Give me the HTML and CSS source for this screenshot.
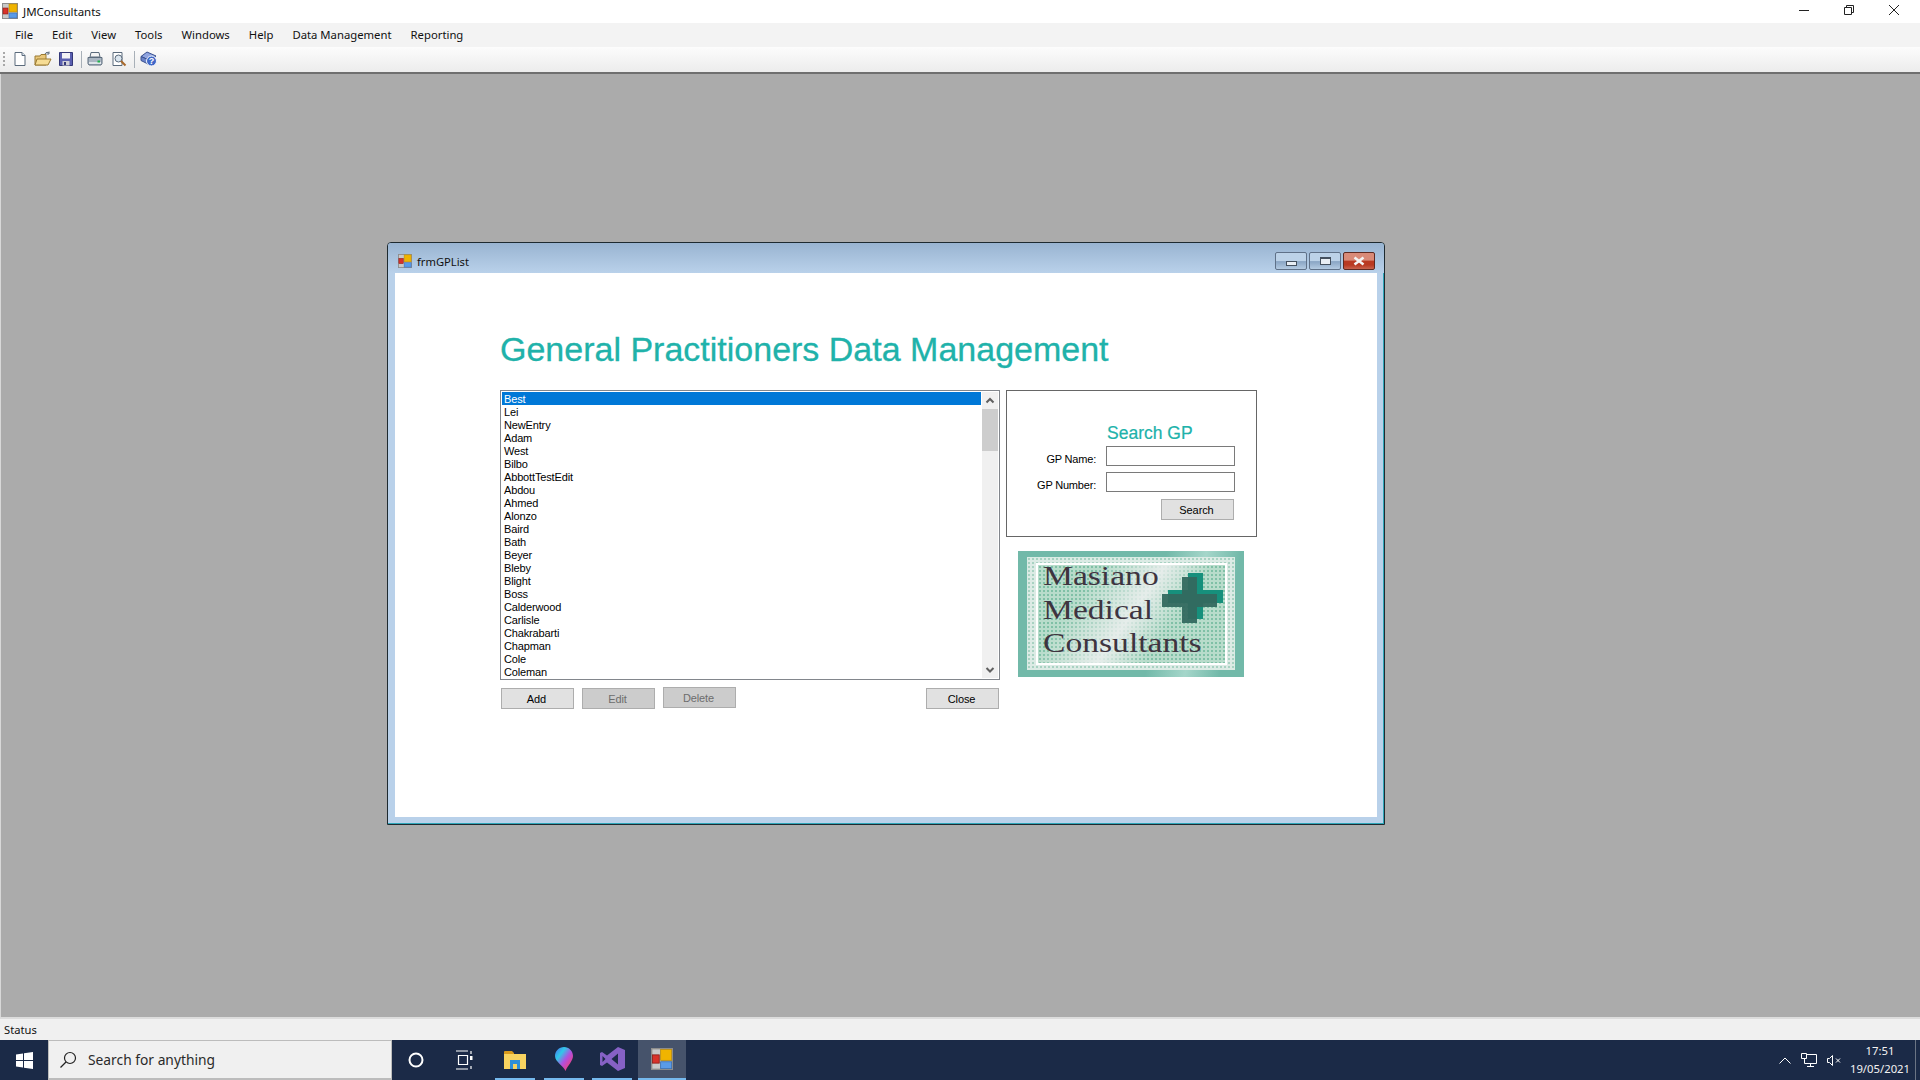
FILE: index.html
```html
<!DOCTYPE html>
<html lang="en">
<head>
    <meta charset="UTF-8">
    <title>JMConsultants</title>
    <link rel="stylesheet" href="styles.css">
</head>
<body>
    <svg width="0" height="0" class="defs">
        <symbol id="app-icon" viewBox="0 0 16 16">
            <rect x="0.5" y="0.5" width="15" height="15" fill="#c9c9c9" stroke="#8d8d8d"/>
            <rect x="7" y="1" width="8" height="8" fill="#f0b400" stroke="#b98a10" stroke-width="0.6"/>
            <rect x="1" y="5" width="5" height="6" fill="#d8322a" stroke="#8a1d18" stroke-width="0.6"/>
            <rect x="7" y="10" width="8" height="5" fill="#5a9be8" stroke="#3a6db0" stroke-width="0.6"/>
        </symbol>
    </svg>

    <div class="titlebar">
        <svg class="app-icon" width="16" height="16"><use href="#app-icon"/></svg>
        <span class="app-name">JMConsultants</span>
        <div class="win-controls">
            <svg width="12" height="12" viewBox="0 0 12 12"><path d="M1 6.5h10" stroke="#222" fill="none"/></svg>
            <svg width="12" height="12" viewBox="0 0 12 12"><path d="M1.5 3.5h7v7h-7zM3.5 3.5v-2h7v7h-2" stroke="#222" fill="none"/></svg>
            <svg width="12" height="12" viewBox="0 0 12 12"><path d="M1 1l10 10M11 1L1 11" stroke="#222" fill="none"/></svg>
        </div>
    </div>

    <div class="menubar">
        <span>File</span><span>Edit</span><span>View</span><span>Tools</span><span>Windows</span><span>Help</span><span>Data Management</span><span>Reporting</span>
    </div>

    <div class="toolbar">
        <div class="grip"></div>
        <svg class="tool" width="16" height="16" viewBox="0 0 16 16"><path d="M3 1.5h7l3 3v10H3z" fill="#fff" stroke="#5b6b7c"/><path d="M10 1.5v3h3" fill="#dfe8f2" stroke="#5b6b7c"/></svg>
        <svg class="tool" width="18" height="16" viewBox="0 0 18 16"><path d="M1 5h5l1-1.500h5V14H1z" fill="#e9c77a" stroke="#9a7a32"/><path d="M3 8h14l-3 6H1z" fill="#f6dc94" stroke="#9a7a32"/><path d="M11 3c1-2 3-2 4-1M15 0.500v2.500h-2.500" fill="none" stroke="#5b6b7c"/></svg>
        <svg class="tool" width="16" height="16" viewBox="0 0 16 16"><path d="M1.500 1.500h13v13h-13z" fill="#5a5fb0" stroke="#343878"/><path d="M4 2h8v5.500H4z" fill="#f2f2f6"/><path d="M4.500 10h7v4.500h-7z" fill="#d0d0d8"/><path d="M6 11h2v3H6z" fill="#343878"/></svg>
        <div class="tool-sep"></div>
        <svg class="tool tool-print" width="16" height="16" viewBox="0 0 16 16"><path d="M4 1.500h8L13 6H3z" fill="#f4f4f4" stroke="#5b6b7c"/><path d="M1 6.500h14v6l-1 1.500H2l-1-1.500z" fill="#aab6c2" stroke="#5b6b7c"/><path d="M2 11h12v2H2z" fill="#dfe5ea"/><path d="M10.500 9.500h2.500v2h-2.500z" fill="#1fb14a"/></svg>
        <svg class="tool" width="16" height="16" viewBox="0 0 16 16"><path d="M2 1.500h9v13H2z" fill="#fff" stroke="#5b6b7c"/><circle cx="7.500" cy="7.500" r="3.500" fill="#dbe6ef" stroke="#5b6b7c"/><path d="M10 10l4.500 4.500" stroke="#a8682a" stroke-width="2"/></svg>
        <div class="tool-sep"></div>
        <svg class="tool" width="17" height="16" viewBox="0 0 17 16"><path d="M1 5.500l6-4.500 9 4-6 4.500z" fill="#8fa4e0" stroke="#38508f"/><path d="M1 5.500v4l9 4.500v-4.500z" fill="#6c83c8" stroke="#38508f"/><circle cx="11.500" cy="10" r="5" fill="#3f68c8" stroke="#f2f5fb"/><text x="11.500" y="13.300" class="help-mark">?</text></svg>
    </div>

    <main class="mdi">
        <section class="child-window">
            <header class="child-title">
                <svg class="child-icon" width="14" height="14"><use href="#app-icon"/></svg>
                <span class="child-name">frmGPList</span>
                <div class="child-controls">
                    <div class="cap-btn"><span class="cap-min"></span></div>
                    <div class="cap-btn"><span class="cap-max"></span></div>
                    <div class="cap-btn cap-close"><svg width="14" height="10" viewBox="0 0 14 10"><path d="M2.500 1.500l9 7M11.500 1.500l-9 7" stroke="#f4f4f4" stroke-width="2.600" fill="none"/></svg></div>
                </div>
            </header>

            <div class="client">
                <h1 class="page-heading">General Practitioners Data Management</h1>

                <div class="columns">
                    <div class="list-col">
                        <div class="listbox">
                            <ul class="gp-list">
                                <li class="selected">Best</li>
                                <li>Lei</li>
                                <li>NewEntry</li>
                                <li>Adam</li>
                                <li>West</li>
                                <li>Bilbo</li>
                                <li>AbbottTestEdit</li>
                                <li>Abdou</li>
                                <li>Ahmed</li>
                                <li>Alonzo</li>
                                <li>Baird</li>
                                <li>Bath</li>
                                <li>Beyer</li>
                                <li>Bleby</li>
                                <li>Blight</li>
                                <li>Boss</li>
                                <li>Calderwood</li>
                                <li>Carlisle</li>
                                <li>Chakrabarti</li>
                                <li>Chapman</li>
                                <li>Cole</li>
                                <li>Coleman</li>
                            </ul>
                            <div class="scrollbar">
                                <svg class="arrow" width="16" height="17" viewBox="0 0 16 17"><path d="M4.500 10.500L8 7l3.500 3.500" stroke="#606060" stroke-width="2" fill="none"/></svg>
                                <div class="thumb"></div>
                                <svg class="arrow arrow-down" width="16" height="17" viewBox="0 0 16 17"><path d="M4.500 7L8 10.500 11.500 7" stroke="#606060" stroke-width="2" fill="none"/></svg>
                            </div>
                        </div>
                        <div class="list-buttons">
                            <button class="btn">Add</button>
                            <button class="btn btn-off">Edit</button>
                            <button class="btn btn-off btn-raised">Delete</button>
                            <button class="btn btn-close">Close</button>
                        </div>
                    </div>

                    <div class="side-col">
                        <div class="search-box">
                            <h2 class="search-heading">Search GP</h2>
                            <div class="field">
                                <label class="field-label">GP Name:</label>
                                <input class="field-input" type="text">
                            </div>
                            <div class="field">
                                <label class="field-label">GP Number:</label>
                                <input class="field-input" type="text">
                            </div>
                            <button class="btn btn-search">Search</button>
                        </div>

                        <div class="logo">
                            <div class="logo-band">
                                <div class="logo-inner">
                                    <div class="logo-text">
                                        <div>Masiano</div>
                                        <div>Medical</div>
                                        <div>Consultants</div>
                                    </div>
                                    <svg class="logo-cross" width="61" height="50" viewBox="0 0 61 50">
                                        <path d="M26 0h15v17h20v13H41v16H26V30H6V17h20z" fill="#16907c"/>
                                        <path d="M20 4h15v17h20v13H35v16H20V34H0V21h20z" fill="#33695f" opacity="0.95"/>
                                    </svg>
                                </div>
                            </div>
                        </div>
                    </div>
                </div>
            </div>
        </section>
    </main>

    <div class="statusbar">Status</div>

    <footer class="taskbar">
        <div class="start">
            <svg width="17" height="17" viewBox="0 0 17 17"><path d="M0 2.400l7-1v6.600H0zM8 1.200L17 0v8H8zM0 9h7v6.600l-7-1zM8 9h9v8l-9-1.200z" fill="#fff"/></svg>
        </div>
        <div class="task-search">
            <svg width="18" height="18" viewBox="0 0 18 18"><circle cx="11" cy="7" r="5.500" fill="none" stroke="#222" stroke-width="1.200"/><path d="M7 11l-5.500 5.500" stroke="#222" stroke-width="1.300"/></svg>
            <span>Search for anything</span>
        </div>
        <div class="task-icon">
            <svg width="18" height="18" viewBox="0 0 18 18"><circle cx="9" cy="9" r="6.500" fill="none" stroke="#fff" stroke-width="2"/></svg>
        </div>
        <div class="task-icon">
            <svg width="18" height="20" viewBox="0 0 18 20"><path d="M1 1h12M1 19h12M3.500 5.500h9v9h-9z" fill="none" stroke="#fff" stroke-width="1.200"/><path d="M15 6h2.500v4H15z" fill="#fff"/><path d="M16 1v3M16 16v3" stroke="#fff" stroke-width="1.200"/></svg>
        </div>
        <div class="task-app running explorer">
            <svg width="22" height="19" viewBox="0 0 22 19"><path d="M0 2a1 1 0 0 1 1-1h7l2 2v2H0z" fill="#d99a1c"/><path d="M0 4h22v15H0z" fill="#f8d360"/><path d="M6 10h10v9h-3v-5H9v5H6z" fill="#2f8fd8"/></svg>
        </div>
        <div class="task-app running">
            <svg width="18" height="24" viewBox="0 0 18 24">
                <defs>
                    <linearGradient id="pin-fill" x1="0" y1="0" x2="1" y2="1">
                        <stop offset="0" stop-color="#4a6cf0"/>
                        <stop offset="0.3" stop-color="#30c8e8"/>
                        <stop offset="0.55" stop-color="#b050e0"/>
                        <stop offset="0.85" stop-color="#f0407a"/>
                        <stop offset="1" stop-color="#f09030"/>
                    </linearGradient>
                </defs>
                <path d="M9 0c5 0 9 4 9 9 0 5-5 9-7.500 15C9 19 0 15 0 9c0-5 4-9 9-9z" fill="url(#pin-fill)"/>
            </svg>
        </div>
        <div class="task-app running">
            <svg width="25" height="24" viewBox="0 0 25 24"><path d="M18 0l7 3v18l-7 3-11-8.500L2 19l-2-1V6l2-1 5 3.500zM18 6.500L11.500 12 18 17.500zM2.500 9v6l3-3z" fill="#8661c5"/></svg>
        </div>
        <div class="task-app running active">
            <svg width="22" height="22"><use href="#app-icon"/></svg>
        </div>

        <div class="tray">
            <svg width="12" height="7" viewBox="0 0 12 7"><path d="M0.500 6.500L6 1l5.500 5.500" fill="none" stroke="#fff"/></svg>
            <svg width="16" height="14" viewBox="0 0 16 14"><path d="M3.500 1.500h12v9h-12zM9.500 10.500v3M6 13.500h7" fill="none" stroke="#fff"/><path d="M0.500 0.500h5v5h-5z" fill="#1b2a47" stroke="#fff"/></svg>
            <svg width="14" height="11" viewBox="0 0 14 11"><path d="M0.500 3.500h2l3-3v10l-3-3h-2zM9 3.500l4 4M13 3.500l-4 4" fill="none" stroke="#fff"/></svg>
            <div class="clock">
                <div>17:51</div>
                <div>19/05/2021</div>
            </div>
        </div>
    </footer>
</body>
</html>
```

FILE: styles.css
```css
* {
    box-sizing: border-box;
}
html, body {
    margin: 0;
    height: 100%;
    overflow: hidden;
}
body {
    display: flex;
    flex-direction: column;
    height: 1080px;
    font-family: "Noto Sans", "Open Sans", sans-serif;
    font-size: 12px;
    color: #111;
    background: #ababab;
}
.defs {
    position: absolute;
}

/* main window chrome */
.titlebar {
    display: flex;
    align-items: center;
    height: 23px;
    background: #fff;
    flex: none;
}
.app-icon {
    margin-left: 2px;
    margin-top: -2px;
}
.app-name {
    margin-left: 5px;
    font-size: 11.5px;
}
.win-controls {
    display: flex;
    gap: 33px;
    margin-left: auto;
    margin-right: 20px;
    margin-top: -3px;
}
.menubar {
    display: flex;
    align-items: center;
    gap: 19px;
    height: 24px;
    padding: 0 0 2px 15px;
    background: #f3f3f3;
    flex: none;
    font-size: 11.3px;
}
.toolbar {
    display: flex;
    align-items: center;
    height: 27px;
    padding: 0 0 1px 3px;
    background: linear-gradient(#fcfcfc, #ececec);
    border-bottom: 2px solid #6f6f6f;
    flex: none;
}
.grip {
    width: 2px;
    height: 14px;
    margin-right: 7px;
    background: repeating-linear-gradient(#a8a8a8 0 2px, transparent 2px 4px);
}
.tool {
    margin-right: 6px;
}
.tool-print {
    margin-right: 8px;
}
.tool-sep {
    width: 1px;
    height: 17px;
    margin: 0 5px 0 1px;
    background: #a8b0b8;
}
.help-mark {
    font-family: "Liberation Sans", sans-serif;
    font-size: 9px;
    font-weight: bold;
    fill: #fff;
    text-anchor: middle;
}

/* mdi area */
.mdi {
    position: relative;
    flex: 1;
    border-left: 1px solid #d8d8d8;
    background: #ababab;
}
.child-window {
    position: absolute;
    left: 386px;
    top: 168px;
    display: flex;
    flex-direction: column;
    width: 998px;
    height: 583px;
    padding: 0 7px 7px 7px;
    background: #b9d1ea;
    border: 1px solid #1e2a30;
    border-radius: 4px 4px 0 0;
    box-shadow: inset -1px -1px 0 #2ea6b8;
}
.child-title {
    display: flex;
    align-items: center;
    height: 30px;
    margin: 0 -7px;
    padding: 6px 9px 0 10px;
    background: linear-gradient(#99b4d1, #b9d1ea);
    flex: none;
    border-radius: 3px 3px 0 0;
}
.child-name {
    margin-left: 5px;
    font-size: 11.2px;
}
.child-controls {
    display: flex;
    gap: 2px;
    margin-left: auto;
}
.cap-btn {
    display: flex;
    align-items: center;
    justify-content: center;
    width: 32px;
    height: 18px;
    background: linear-gradient(#bcd2e8 0 50%, #8faac8 50% 60%, #b4cbe2 100%);
    border: 1px solid #5f7188;
    border-radius: 2px;
}
.cap-close {
    background: linear-gradient(#d98a78 0 45%, #b93a22 50% 75%, #c8644e 100%);
    border-color: #5e2a22;
}
.cap-min {
    width: 11px;
    height: 5px;
    margin-top: 4px;
    background: #e8eef4;
    border: 1px solid #44505e;
}
.cap-max {
    width: 11px;
    height: 8px;
    background: #e8eef4;
    border: 1px solid #44505e;
    border-top-width: 2px;
}

.client {
    flex: 1;
    padding: 56px 0 0 105px;
    background: #fff;
}
.page-heading {
    margin: 0;
    font-family: "Liberation Sans", Arial, sans-serif;
    font-size: 34px;
    font-weight: normal;
    line-height: 40px;
    color: #20b2aa;
    -webkit-text-stroke: 0.3px #20b2aa;
}
.columns {
    display: flex;
    gap: 6px;
    margin-top: 21px;
}

/* list side */
.list-col {
    display: flex;
    flex-direction: column;
    width: 500px;
}
.listbox {
    display: flex;
    height: 290px;
    padding: 1px;
    background: #fff;
    border: 1px solid #82868c;
}
.gp-list {
    flex: 1;
    margin: 0;
    padding: 0;
    list-style: none;
    overflow: hidden;
    font-family: "Liberation Sans", Arial, sans-serif;
    font-size: 11px;
    letter-spacing: -0.15px;
    line-height: 14px;
}
.gp-list li {
    height: 13px;
    padding-left: 2px;
    color: #000;
}
.gp-list li.selected {
    background: #0078d7;
    color: #fff;
}
.scrollbar {
    display: flex;
    flex-direction: column;
    width: 16px;
    margin-left: 1px;
    background: #f0f0f0;
}
.arrow {
    flex: none;
}
.arrow-down {
    margin-top: auto;
}
.thumb {
    height: 42px;
    background: #cdcdcd;
}
.list-buttons {
    display: flex;
    align-items: flex-start;
    gap: 8px;
    margin-top: 8px;
    padding-left: 1px;
}
.btn {
    width: 73px;
    height: 21px;
    padding: 0 2px 0 0;
    font-family: "Liberation Sans", Arial, sans-serif;
    font-size: 11px;
    letter-spacing: -0.1px;
    color: #000;
    background: #e1e1e1;
    border: 1px solid #adadad;
}
.btn-off {
    background: #cccccc;
    color: #6d6d6d;
}
.btn-raised {
    margin-top: -1px;
}
.btn-close {
    margin-left: auto;
    margin-right: 1px;
}

/* search panel */
.side-col {
    display: flex;
    flex-direction: column;
    width: 251px;
}
.search-box {
    display: flex;
    flex-direction: column;
    height: 147px;
    padding: 32px 21px 0 0;
    border: 1px solid #666;
    font-family: "Liberation Sans", Arial, sans-serif;
}
.search-heading {
    margin: 0 0 3px 100px;
    font-size: 17.5px;
    font-weight: normal;
    line-height: 20px;
    color: #20b2aa;
    -webkit-text-stroke: 0.2px #20b2aa;
}
.field {
    display: flex;
    align-items: center;
    justify-content: flex-end;
    gap: 10px;
    margin-bottom: 6px;
}
.field-label {
    padding-top: 5px;
    font-size: 11px;
    letter-spacing: -0.2px;
    color: #000;
}
.field-input {
    width: 129px;
    height: 20px;
    padding: 0;
    background: #fff;
    border: 1px solid #7a7a7a;
}
.btn-search {
    align-self: flex-end;
    margin: 1px 1px 0 0;
}

/* logo */
.logo {
    width: 226px;
    height: 126px;
    margin: 14px 0 0 12px;
    padding: 6px 9px 7px 9px;
    background: linear-gradient(100deg, #72b9a9 0 60%, #a5d6ca 76%, #72b9a9 90%);
}
.logo-band {
    height: 100%;
    padding: 6px 8px 5px 9px;
    background-color: #dcebe5;
    background-image: radial-gradient(circle, #a8d2c2 1px, transparent 1.2px);
    background-size: 4px 4px;
}
.logo-inner {
    position: relative;
    height: 100%;
    padding-left: 5px;
    border: 2px solid #fff;
    background-color: #b8dccb;
    background-image:
        linear-gradient(125deg, transparent 25%, rgba(238, 240, 240, 0.85) 50%, transparent 68%),
        radial-gradient(circle, #7fc0a6 1px, transparent 1.2px);
    background-size: 100% 100%, 4px 4px;
}
.logo-text {
    margin-top: -6px;
    font-family: "Liberation Serif", "Times New Roman", serif;
    font-size: 28px;
    line-height: 33.5px;
    color: #3e3440;
    transform: scaleX(1.2);
    transform-origin: left center;
}
.logo-cross {
    position: absolute;
    right: 2px;
    top: 8px;
}

/* status + taskbar */
.statusbar {
    display: flex;
    align-items: center;
    height: 23px;
    padding-left: 4px;
    background: #f0f0f0;
    border-top: 2px solid #dcdcdc;
    flex: none;
    font-size: 11.2px;
}
.taskbar {
    display: flex;
    align-items: center;
    height: 40px;
    background: #1b2a47;
    flex: none;
}
.start {
    display: flex;
    align-items: center;
    justify-content: center;
    width: 48px;
}
.task-search {
    display: flex;
    align-items: center;
    gap: 11px;
    width: 344px;
    height: 40px;
    padding-left: 10px;
    font-size: 13.8px;
    color: #2a2a2a;
    background: #f0f0f0;
    border: 1px solid #bcbcbc;
    border-bottom-width: 2px;
}
.task-icon {
    display: flex;
    align-items: center;
    justify-content: center;
    width: 48px;
    height: 40px;
}
.task-app {
    display: flex;
    align-items: center;
    justify-content: center;
    width: 40px;
    height: 40px;
    margin: 0 4px;
}
.explorer {
    margin-left: 7px;
    margin-right: 5px;
}
.running {
    border-bottom: 2px solid #76b9ed;
}
.active {
    width: 48px;
    margin: 0 0 0 2px;
    background: #46536b;
}
.tray {
    display: flex;
    align-items: center;
    gap: 10px;
    height: 40px;
    margin-left: auto;
    padding-right: 4px;
    color: #fff;
}
.clock {
    width: 68px;
    height: 40px;
    margin-left: -3px;
    padding: 2px 3px 0 0;
    font-size: 11.3px;
    line-height: 18px;
    text-align: center;
    color: #f2f2f2;
    border-right: 1px solid #6b7484;
}
```
